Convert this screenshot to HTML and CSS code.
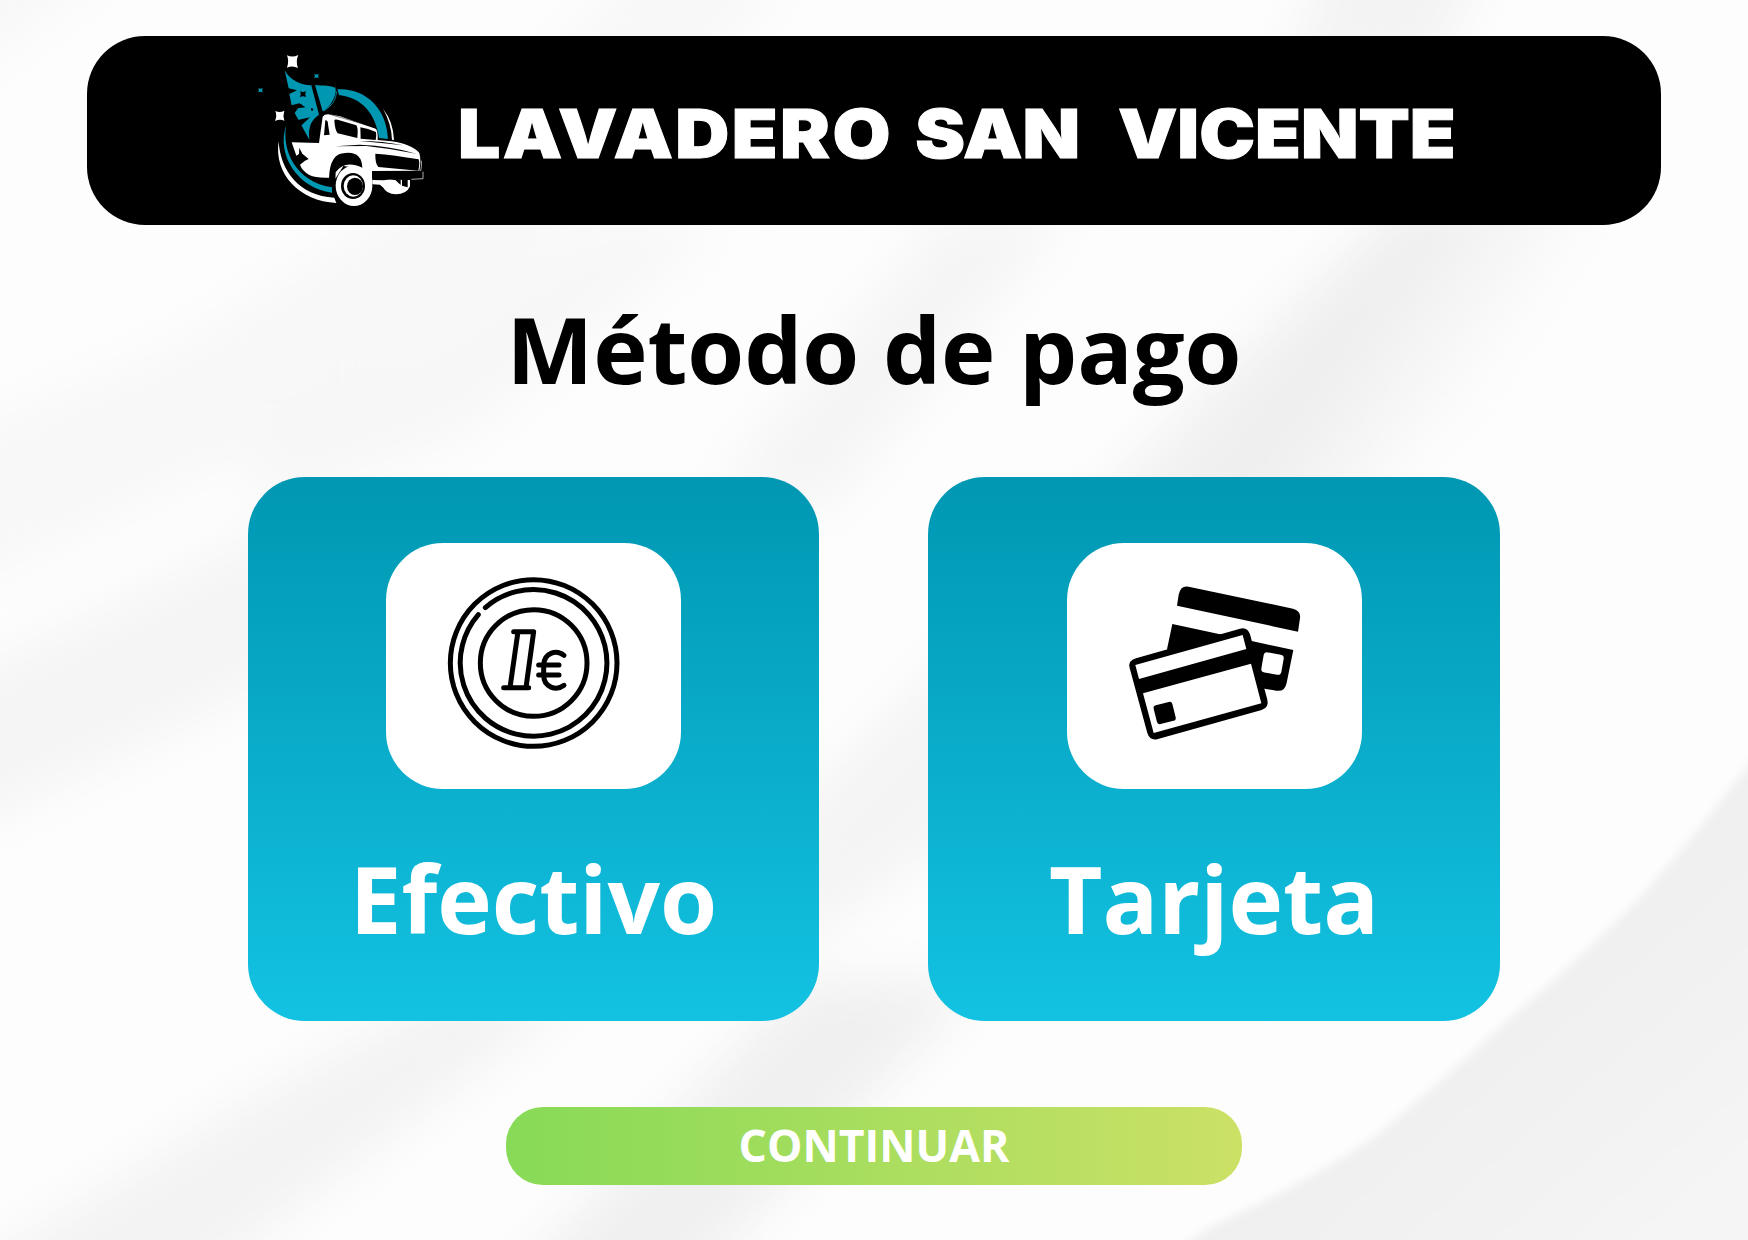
FILE: index.html
```html
<!DOCTYPE html>
<html lang="es">
<head>
<meta charset="utf-8">
<title>Lavadero San Vicente</title>
<link rel="stylesheet" href="styles.css">
</head>
<body>
<svg class="backdrop" viewBox="0 0 1568 1112" preserveAspectRatio="none" aria-hidden="true">
  <defs>
    <filter id="soft" x="-20%" y="-20%" width="140%" height="140%"><feGaussianBlur stdDeviation="22"/></filter>
    <filter id="fold" x="-20%" y="-20%" width="140%" height="140%"><feGaussianBlur stdDeviation="4"/></filter>
    <linearGradient id="corner" gradientUnits="userSpaceOnUse" x1="1330" y1="930" x2="1500" y2="1130"><stop stop-color="#f0f0f0"/><stop offset="1" stop-color="#f5f5f5"/></linearGradient>
    <linearGradient id="drape" gradientUnits="userSpaceOnUse" x1="1090" y1="250" x2="1290" y2="390"><stop stop-color="#f6f6f6"/><stop offset=".5" stop-color="#eeeeee"/><stop offset="1" stop-color="#fbfbfb"/></linearGradient>
  </defs>
  <rect width="1568" height="1112" fill="#fdfdfd"/>
  <g filter="url(#soft)">
    <path fill="#f8f8f8" d="M-60 90L140 -60H-60Z"/>
    <path fill="#f8f8f8" d="M-60 540L240 400L470 240L740 -60H600L380 170L160 310L-60 400Z"/>
    <path fill="#f5f5f5" d="M-60 620L270 460V600L-60 760Z"/>
    <path fill="#f7f7f7" d="M230 460L420 390L650 200H540L380 310L230 390Z"/>
    <path fill="#f5f5f5" d="M640 440L850 190H960L740 460Z"/>
    <path fill="#f3f3f3" d="M1150 60L1210 -60H1340L1290 60Z"/>
    <path fill="#f4f4f4" d="M700 740L870 570V740L700 860Z"/>
    <path fill="#f3f3f3" d="M-60 1160L220 990L400 890H520L150 1170Z"/>
    <path fill="#f0f0f0" d="M440 1170L720 880H880L600 1170Z"/>
  </g>
  <path filter="url(#soft)" fill="url(#drape)" d="M960 470L1110 320L1270 170H1440L1320 360L1200 470Z"/>
  <path filter="url(#fold)" fill="url(#corner)" d="M1590 655L1568 687Q1520 750 1471 805Q1415 862 1352 915Q1292 971 1232 1020Q1170 1062 1090 1098L1040 1130H1590Z"/>
</svg>
<main class="screen">
  <header class="banner">
    <svg class="logo" viewBox="0 0 540 510" aria-hidden="true">
      <g fill="#0097b2">
        <path d="M104 76C120 105 151 120 184 121L207 209C184 224 174 245 178 284L134 204L144 190L166 187L148 175L125 181L118 147L141 136L116 130Z"/>
        <path d="M195 120C218 122 242 122 256 128C262 142 247 183 218 199Z"/>
        <path d="M262 133C340 127 410 185 414 282L387 279C377 207 337 158 267 150Z"/>
        <path d="M109 240C94 315 137 411 246 427V443C144 431 77 329 109 240Z"/>
        <path d="M193 86Q199 91 206 86Q203 93 206 100Q199 95 193 100Q196 93 193 86ZM25 129Q31 133 38 129Q35 136 38 142Q31 138 25 142Q28 136 25 129Z"/>
      </g>
      <path d="M260 139Q258 177 221 198" fill="none" stroke="#0097b2" stroke-width="2.5"/>
      <path d="M150 138Q159 144 168 138Q163 147 168 157Q159 151 150 157Q155 147 150 138ZM183 190L190 191L189 197L183 196ZM150 179L155 177L154 184ZM140 226L180 217L153 242Z"/>
      <g fill="#fff">
        <path d="M111 31Q127 39 145 30Q136 49 144 69Q127 60 111 68Q118 49 111 31ZM76 198Q90 204 103 197Q98 212 103 227Q89 221 75 228Q82 212 76 198Z"/>
        <path d="M399 191Q430 230 432 285L426 284Q424 235 399 191Z"/>
        <path d="M86 289C91 377 147 453 253 458L259 474C149 469 71 388 86 289Z"/>
        <path d="M125 292L207 294L218 215Q222 208 234 207L270 214L377 251Q384 256 383 285L424 289Q486 298 508 324Q514 345 508 377L366 378L367 415L330 370L280 363L257 400L239 398Q198 400 178 390Q156 377 150 359L165 347L176 342L157 326L148 308L147 327L139 332Z"/>
        <path d="M367 405L402 406Q418 402 435 405L456 404V422L473 427V405H480V424Q470 448 437 448Q409 446 400 428L390 419L367 418Z"/>
        <ellipse cx="312" cy="422" rx="55" ry="61"/>
      </g>
      <path d="M218 211Q224 205 236 207L377 248" fill="none" stroke="#000" stroke-width="1.5"/>
      <path d="M226 226Q234 225 234 238L239 269L222 271ZM253 227Q252 222 263 224L319 241Q325 248 322 279L263 265Q255 255 253 227ZM331 247Q354 250 378 261Q380 274 377 285L332 281Z"/>
      <path d="M237 400Q239 324 286 324Q335 319 337 368Q284 343 257 382L256 410Z"/>
      <path d="M376 326Q431 330 506 343Q510 357 505 377L385 366Q375 355 376 326ZM366 379H519V402L480 404L366 401Z"/>
      <path d="M514 347Q516 360 512 378M519 380V401L484 403" fill="none" stroke="#fff" stroke-width="2"/>
      <path d="M256 304L329 299Q425 303 499 326Q425 311 349 303ZM329 288Q398 288 460 301Q398 294 329 288ZM436 405H452V420Z"/>
      <ellipse cx="309" cy="423" rx="36" ry="39"/>
      <ellipse cx="310" cy="423" rx="29" ry="32" fill="#fff"/>
      <ellipse cx="315" cy="424" rx="24" ry="26"/>
      <path d="M250 404Q246 449 270 478" fill="none" stroke="#000" stroke-width="8"/>
    </svg>
    <h1 class="brand"><span class="w1">LAVADERO</span> <span class="w2">SAN</span> <span class="w3">VICENTE</span></h1>
  </header>
  <h2 class="title">Método de pago</h2>
  <div class="methods">
    <button class="method">
      <span class="tile">
        <svg viewBox="18 24 885 738" fill="none" stroke="#000" stroke-width="15" stroke-linecap="round" stroke-linejoin="round" aria-hidden="true">
          <circle cx="461" cy="384" r="250"/>
          <circle cx="461" cy="384" r="160"/>
          <path d="M316 218A220 220 0 1 1 295 239"/>
          <path d="M401 290H461L438 458M401 290H414L390 458M371 458H446"/>
          <path d="M552 361C529 342 491 354 491 391V421C491 457 529 469 552 451M476 390H537M476 420H537"/>
        </svg>
      </span>
      <span class="label">Efectivo</span>
    </button>
    <button class="method">
      <span class="tile">
        <svg viewBox="21 24 885 738" aria-hidden="true">
          <path d="M351 212L356 179Q362 150 386 155L699 221Q723 227 720 250L714 290Z"/>
          <path d="M337 267L480 298L575 318L700 345L680 443Q675 471 649 467L614 461L440 400L321 343Z"/>
          <rect x="607" y="355" width="61" height="61" rx="11" fill="#fff" transform="rotate(10 637 386)"/>
          <path d="M228 370L540 281Q562 275 570 298L622 494Q628 517 605 525L294 612Q270 619 262 594L209 399Q203 377 228 370Z"/>
          <path fill="#fff" d="M226 390L548 300L559 342L237 432ZM249 475L573 386L604 505L281 594Z"/>
          <rect x="285" y="505" width="58" height="58" rx="9" transform="rotate(-14 314 534)"/>
        </svg>
      </span>
      <span class="label">Tarjeta</span>
    </button>
  </div>
  <button class="continue">CONTINUAR</button>
</main>
</body>
</html>
```
FILE: styles.css
```css
* { box-sizing: border-box; }
body { margin: 0; background: #fdfdfd; font-family: "Open Sans", sans-serif; color: #000; }
button { border: 0; padding: 0; margin: 0; font: inherit; color: #fff; cursor: pointer; }
.backdrop { position: absolute; inset: 0; width: 1748px; height: 1240px; z-index: -1; }
.screen { width: 1748px; height: 1240px; overflow: hidden; padding: 36px 87px 0; display: flex; flex-direction: column; align-items: center; }
.banner { width: 100%; height: 189px; flex: none; background: #000; border-radius: 58px; display: flex; align-items: flex-start; padding: 9px 0 0 163px; }
.logo { width: 180px; height: 170px; flex: none; }
.brand { margin: 48px 0 0 28px; display: flex; font: 900 67.4px/82px Inter, sans-serif; color: #fff; white-space: nowrap; transform: scaleX(1.11); transform-origin: left; -webkit-text-stroke: 1px #fff; }
.w1 { width: 412px; letter-spacing: 2.2px; }
.w2 { width: 182.5px; }
.title { margin: 61px 0 0; height: 126px; font-size: 92px; line-height: 126px; font-weight: 700; letter-spacing: -0.1px; white-space: nowrap; }
.methods { display: flex; gap: 109px; margin-top: 65px; margin-right: 0.5px; }
.method { width: 571.5px; height: 543.5px; border-radius: 57px; background: linear-gradient(#0097b2, #13c2e2); display: flex; flex-direction: column; align-items: center; padding-top: 66px; }
.tile { width: 295px; height: 246px; flex: none; border-radius: 57px; background: #fff; }
.tile svg { display: block; width: 100%; height: 100%; }
.label { margin-top: 46px; font-size: 92.4px; line-height: 126px; font-weight: 700; }
.continue { margin-top: 86.5px; width: 736.5px; height: 78px; border-radius: 37px; background: linear-gradient(90deg, #87da57, #cbe166); font-size: 44.6px; line-height: 76px; padding-bottom: 2px; font-weight: 700; }
```
